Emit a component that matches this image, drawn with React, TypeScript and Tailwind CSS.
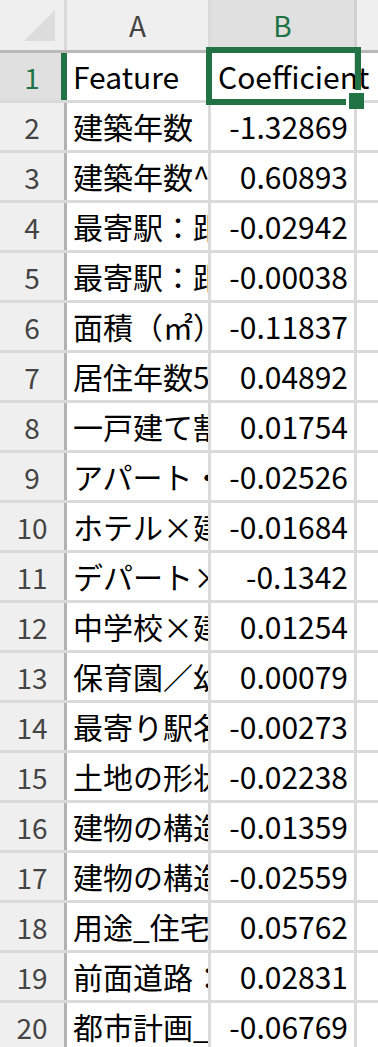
const rows: { label: string; value: string }[] = [
  { label: "建築年数", value: "-1.32869" },
  { label: "建築年数^2", value: "0.60893" },
  { label: "最寄駅：距離（分）", value: "-0.02942" },
  { label: "最寄駅：距離（分）^2", value: "-0.00038" },
  { label: "面積（㎡）", value: "-0.11837" },
  { label: "居住年数5年以上", value: "0.04892" },
  { label: "一戸建て割合", value: "0.01754" },
  { label: "アパート・マンション割合", value: "-0.02526" },
  { label: "ホテル×建築年数", value: "-0.01684" },
  { label: "デパート×建築年数", value: "-0.1342" },
  { label: "中学校×建築年数", value: "0.01254" },
  { label: "保育園／幼稚園×建築年数", value: "0.00079" },
  { label: "最寄り駅名_ダミー", value: "-0.00273" },
  { label: "土地の形状", value: "-0.02238" },
  { label: "建物の構造", value: "-0.01359" },
  { label: "建物の構造_木造", value: "-0.02559" },
  { label: "用途_住宅", value: "0.05762" },
  { label: "前面道路：幅員", value: "0.02831" },
  { label: "都市計画_用途地域", value: "-0.06769" },
]

export default function App() {
  return (
    <div className="relative h-[1047px] w-[378px] overflow-hidden bg-white font-['Noto_Sans_CJK_JP',sans-serif] text-black">
      {/* column headers */}
      <div className="flex h-[53px] border-b-[3px] border-[#b9b9b9] bg-[#efefef]">
        <div className="relative w-[67px] shrink-0 border-r-[3px] border-[#dadada]">
          <svg className="absolute left-0 top-0" width="64" height="50">
            <polygon points="24,41 55,41 55,10" fill="#dcdcdc" />
          </svg>
        </div>
        <div className="flex w-[144px] shrink-0 items-center justify-center border-r-[3px] border-[#dadada] text-[28px] text-[#444]">
          A
        </div>
        <div className="flex w-[146px] shrink-0 items-center justify-center border-r-[3px] border-[#d0d0d0] bg-[#e0e0e0] text-[28px] text-[#217346]">
          B
        </div>
        <div className="flex-1" />
      </div>

      {/* row 1 */}
      <div className="flex h-[50px] border-b-[3px] border-[#dadada]">
        <div className="flex w-[67px] shrink-0 items-center justify-center border-r-[6px] border-[#217346] bg-[#e0e0e0] pl-[3px] text-[28px] text-[#217346]">
          1
        </div>
        <div className="flex w-[144px] shrink-0 items-center overflow-hidden whitespace-nowrap border-r-[3px] border-[#dadada] pl-[6px] text-[30px]">
          Feature
        </div>
        <div className="flex w-[146px] shrink-0 items-center whitespace-nowrap border-r-[3px] border-[#dadada] pl-[7px] text-[30px]">
          Coefficient
        </div>
        <div className="flex-1" />
      </div>

      {rows.map((r, i) => (
        <div key={i} className="flex h-[50px] border-b-[3px] border-[#dadada]">
          <div className="flex w-[67px] shrink-0 items-center justify-center border-r-[3px] border-[#b3b3b3] bg-[#efefef] text-[28px] text-[#444]">
            {i + 2}
          </div>
          <div className="flex w-[144px] shrink-0 items-center overflow-hidden whitespace-nowrap border-r-[3px] border-[#dadada] pl-[6px] text-[30px]">
            {r.label}
          </div>
          <div className="flex w-[146px] shrink-0 items-center justify-end whitespace-nowrap border-r-[3px] border-[#dadada] pr-[6px] text-[30px]">
            {r.value}
          </div>
          <div className="flex-1" />
        </div>
      ))}

      {/* selected cell B1 */}
      <div className="absolute left-[206px] top-[47px] h-[58px] w-[155px] border-[6px] border-[#217346]" />
      <div className="absolute left-[346px] top-[90px] h-[19px] w-[18px] border-l-[3px] border-t-[3px] border-white bg-[#217346]" />
    </div>
  )
}
